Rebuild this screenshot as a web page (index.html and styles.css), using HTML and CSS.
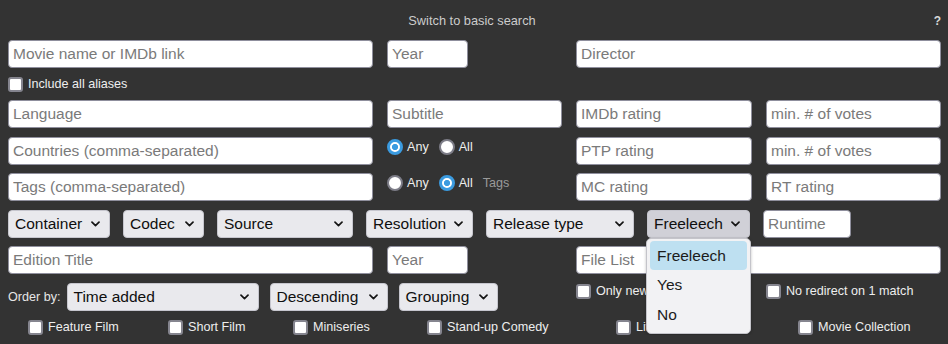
FILE: index.html
```html
<!DOCTYPE html>
<html>
<head>
<meta charset="utf-8">
<title>Advanced search</title>
<link rel="stylesheet" href="styles.css">
</head>
<body>
<div class="page">
  <div class="top">
    <a class="switch" href="#">Switch to basic search</a>
    <span class="help">?</span>
  </div>
  <form class="grid">
    <input class="f col-a" placeholder="Movie name or IMDb link">
    <input class="f year" placeholder="Year">
    <input class="f span-cd" placeholder="Director">

    <label class="check span-all"><input type="checkbox"><span>Include all aliases</span></label>

    <input class="f col-a" placeholder="Language">
    <input class="f" placeholder="Subtitle">
    <input class="f" placeholder="IMDb rating">
    <input class="f" placeholder="min. # of votes">

    <input class="f col-a" placeholder="Countries (comma-separated)">
    <div class="radios">
      <label><input type="radio" name="cm" checked><span>Any</span></label>
      <label><input type="radio" name="cm"><span>All</span></label>
    </div>
    <input class="f" placeholder="PTP rating">
    <input class="f" placeholder="min. # of votes">

    <input class="f col-a" placeholder="Tags (comma-separated)">
    <div class="radios">
      <label><input type="radio" name="tm"><span>Any</span></label>
      <label><input type="radio" name="tm" checked><span>All</span></label>
      <span class="muted">Tags</span>
    </div>
    <input class="f" placeholder="MC rating">
    <input class="f" placeholder="RT rating">

    <div class="selects span-all">
      <div class="sel w-container"><span>Container</span><svg viewBox="0 0 9 6"><path d="M1 1.2 4.5 4.6 8 1.2"/></svg></div>
      <div class="sel w-codec"><span>Codec</span><svg viewBox="0 0 9 6"><path d="M1 1.2 4.5 4.6 8 1.2"/></svg></div>
      <div class="sel w-source"><span>Source</span><svg viewBox="0 0 9 6"><path d="M1 1.2 4.5 4.6 8 1.2"/></svg></div>
      <div class="sel w-res"><span>Resolution</span><svg viewBox="0 0 9 6"><path d="M1 1.2 4.5 4.6 8 1.2"/></svg></div>
      <div class="sel w-rel"><span>Release type</span><svg viewBox="0 0 9 6"><path d="M1 1.2 4.5 4.6 8 1.2"/></svg></div>
      <div class="dd">
        <div class="sel w-free open"><span>Freeleech</span><svg viewBox="0 0 9 6"><path d="M1 1.2 4.5 4.6 8 1.2"/></svg></div>
        <ul class="menu">
          <li class="hl">Freeleech</li>
          <li>Yes</li>
          <li>No</li>
        </ul>
      </div>
      <input class="f w-runtime" placeholder="Runtime">
    </div>

    <input class="f col-a" placeholder="Edition Title">
    <input class="f year" placeholder="Year">
    <input class="f span-cd" placeholder="File List">

    <div class="order span-ab">
      <span class="order-label">Order by:</span>
      <div class="sel w-time"><span>Time added</span><svg viewBox="0 0 9 6"><path d="M1 1.2 4.5 4.6 8 1.2"/></svg></div>
      <div class="sel w-desc"><span>Descending</span><svg viewBox="0 0 9 6"><path d="M1 1.2 4.5 4.6 8 1.2"/></svg></div>
      <div class="sel w-group"><span>Grouping</span><svg viewBox="0 0 9 6"><path d="M1 1.2 4.5 4.6 8 1.2"/></svg></div>
    </div>
    <label class="check top-check"><input type="checkbox"><span>Only new releases</span></label>
    <label class="check top-check"><input type="checkbox"><span>No redirect on 1 match</span></label>
  </form>

  <div class="cats">
    <label class="check"><input type="checkbox"><span>Feature Film</span></label>
    <label class="check"><input type="checkbox"><span>Short Film</span></label>
    <label class="check"><input type="checkbox"><span>Miniseries</span></label>
    <label class="check"><input type="checkbox"><span>Stand-up Comedy</span></label>
    <label class="check"><input type="checkbox"><span>Live Performance</span></label>
    <label class="check"><input type="checkbox"><span>Movie Collection</span></label>
  </div>
</div>
</body>
</html>
```
FILE: styles.css
```css
html, body {
  margin: 0;
  padding: 0;
  background: #333333;
}

body {
  font-family: "Liberation Sans", Arial, sans-serif;
  color: #e6e6e6;
  font-size: 12.6px;
}

.page {
  padding: 0 8px;
  width: 932px;
}

.top {
  display: flex;
  justify-content: center;
  position: relative;
  padding-top: 13px;
  height: 16px;
  line-height: 16px;
  margin-bottom: 11px;
}

.switch {
  color: #cccccc;
  text-decoration: none;
  font-size: 12.8px;
  margin-left: -4px;
}

.help {
  position: absolute;
  right: -1px;
  top: 13px;
  font-weight: bold;
  color: #d8d8d8;
  font-size: 12px;
}

.grid {
  display: grid;
  grid-template-columns: 365px 175px 176px 175px;
  grid-template-rows: 28px 15px repeat(6, 28px);
  column-gap: 14px;
  row-gap: 8.5px;
  margin: 0;
}

.col-a {
  grid-column: 1;
}

.f {
  box-sizing: border-box;
  height: 28px;
  margin: 0;
  padding: 0 4px;
  border: 1px solid #8f8f9d;
  border-radius: 4px;
  background: #ffffff;
  font-family: "Liberation Sans", Arial, sans-serif;
  font-size: 15.5px;
  color: #111;
  min-width: 0;
}

.f::placeholder {
  color: #7a7a7a;
}

.year {
  width: 81px;
}

.span-cd {
  grid-column: 3 / 5;
}

.span-ab {
  grid-column: 1 / 3;
}

.span-all {
  grid-column: 1 / 5;
}

.check {
  display: flex;
  align-items: center;
  gap: 5px;
  font-size: 12.6px;
  color: #eeeeee;
  white-space: nowrap;
}

.check input {
  appearance: none;
  -webkit-appearance: none;
  box-sizing: border-box;
  width: 15px;
  height: 15px;
  margin: 0;
  background: #ffffff;
  border: 2px solid #85858f;
  border-radius: 3px;
  flex: none;
}

.radios {
  display: flex;
  align-items: center;
  align-self: start;
  padding-top: 2px;
  gap: 10px;
  font-size: 12.6px;
  color: #eeeeee;
}

.radios label {
  display: flex;
  align-items: center;
  gap: 4px;
}

.radios input {
  appearance: none;
  -webkit-appearance: none;
  box-sizing: border-box;
  width: 16px;
  height: 16px;
  margin: 0;
  border-radius: 50%;
  border: 2.5px solid #7d7d88;
  background: #ffffff;
}

.radios input:checked {
  border: 3px solid #3b9be0;
  background: radial-gradient(circle, #3b9be0 0 2.8px, #ffffff 3.3px);
}

.muted {
  color: #9a9a9a;
}

.selects {
  display: flex;
  gap: 13px;
}

.sel {
  box-sizing: border-box;
  height: 28px;
  display: flex;
  align-items: center;
  justify-content: space-between;
  padding: 0 9px 0 6px;
  background: #e9e9ed;
  border: 1px solid #c6c6ce;
  border-radius: 4px;
  font-size: 15.5px;
  color: #0f0f0f;
  white-space: nowrap;
}

.sel svg {
  width: 9px;
  height: 6px;
  fill: none;
  stroke: #151515;
  stroke-width: 1.7;
  stroke-linecap: round;
  stroke-linejoin: round;
  flex: none;
}

.sel.open {
  background: #d0d0d7;
}

.w-container { width: 102px; }
.w-codec { width: 81px; }
.w-source { width: 136px; }
.w-res { width: 107px; }
.w-rel { width: 148px; }
.w-free { width: 103px; }
.w-runtime { width: 88px; }
.w-time { width: 192px; }
.w-desc { width: 118px; }
.w-group { width: 99px; }

.dd {
  position: relative;
}

.menu {
  position: absolute;
  top: 100%;
  left: -1px;
  z-index: 5;
  box-sizing: border-box;
  width: 105px;
  height: 96px;
  margin: 0;
  padding: 2px 3px;
  list-style: none;
  background: #f2f2f4;
  border: 1px solid #c4c4ca;
  border-radius: 5px;
  box-shadow: 0 1px 3px rgba(0, 0, 0, 0.25);
}

.menu li {
  height: 30px;
  line-height: 28px;
  padding-left: 7px;
  font-size: 15.5px;
  color: #1c1c1c;
  border-radius: 4px;
}

.menu li.hl {
  height: 29px;
  line-height: 29px;
  margin-bottom: 1px;
  background: #bee0f1;
}

.order {
  display: flex;
  align-items: center;
  gap: 11px;
}

.order-label {
  font-size: 12.6px;
  color: #e6e6e6;
  margin-right: -5px;
}

.top-check {
  align-self: start;
  margin-top: 1px;
}

.cats {
  display: grid;
  grid-template-columns: 140px 125px 134px 189px 182px 1fr;
  justify-items: start;
  padding-left: 20px;
  margin-top: 9px;
}
```
